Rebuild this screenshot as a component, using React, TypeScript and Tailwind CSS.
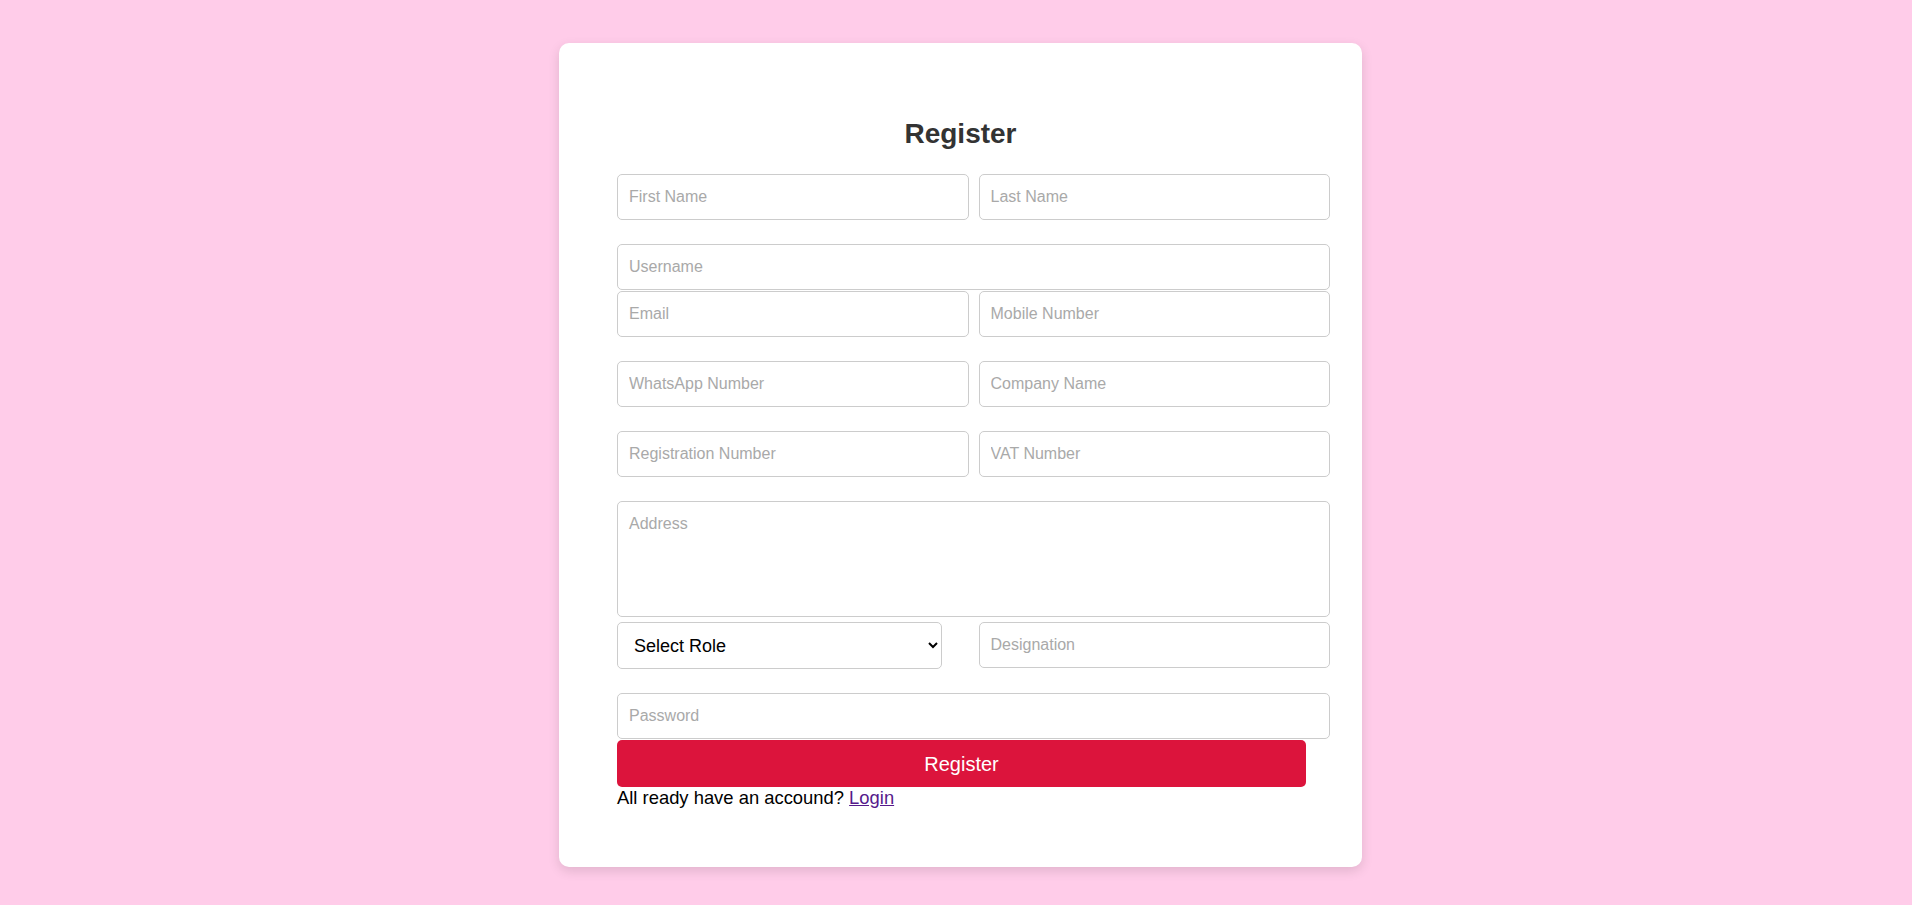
import React from "react";

const inputCls =
  "block w-full h-[46px] border border-[#ccc] rounded-[5px] bg-white px-[11px] text-[16px] text-black placeholder:text-[#a9a9a9] outline-none";

export default function App() {
  return (
    <div className="min-h-screen w-full bg-[#ffcce9] flex justify-center pt-[43px] pl-[9px] font-['Liberation_Sans',Arial,sans-serif]">
      <div className="w-[803px] h-[824px] bg-white rounded-[10px] shadow-[0_4px_12px_rgba(0,0,0,0.12)] pt-[75px]">
        <h2 className="text-center text-[28px] leading-[31px] font-bold text-[#333] mb-[25px]">
          Register
        </h2>
        <form className="ml-[58px] w-[713px]" onSubmit={(e) => e.preventDefault()}>
          <div className="grid grid-cols-2 gap-x-[10px] mb-6">
            <input className={inputCls} placeholder="First Name" />
            <input className={inputCls} placeholder="Last Name" />
          </div>
          <input className={inputCls + " mb-[1px]"} placeholder="Username" />
          <div className="grid grid-cols-2 gap-x-[10px] mb-6">
            <input className={inputCls} placeholder="Email" />
            <input className={inputCls} placeholder="Mobile Number" />
          </div>
          <div className="grid grid-cols-2 gap-x-[10px] mb-6">
            <input className={inputCls} placeholder="WhatsApp Number" />
            <input className={inputCls} placeholder="Company Name" />
          </div>
          <div className="grid grid-cols-2 gap-x-[10px] mb-6">
            <input className={inputCls} placeholder="Registration Number" />
            <input className={inputCls} placeholder="VAT Number" />
          </div>
          <textarea
            className="block w-full h-[116px] border border-[#ccc] rounded-[5px] bg-white px-[11px] py-[10px] text-[16px] text-black placeholder:text-[#a9a9a9] outline-none resize-none mb-[5px]"
            placeholder="Address"
          />
          <div className="grid grid-cols-2 gap-x-[10px] items-start mb-6">
            <select
              className="block w-[325px] h-[47px] border border-[#ccc] rounded-[5px] bg-white pl-[12px] pr-[8px] text-[18px] text-black outline-none"
              defaultValue=""
            >
              <option value="">Select Role</option>
              <option value="admin">Admin</option>
              <option value="user">User</option>
            </select>
            <input className={inputCls} placeholder="Designation" />
          </div>
          <input className={inputCls} type="password" placeholder="Password" />
          <button
            type="submit"
            className="block w-[689px] h-[47px] mt-[1px] bg-[#dc143c] text-white text-[20px] rounded-[5px]"
          >
            Register
          </button>
          <p className="text-[18.4px] leading-[21px] text-black">
            All ready have an accound?{" "}
            <a href="#" className="text-[#551a8b] underline">
              Login
            </a>
          </p>
        </form>
      </div>
    </div>
  );
}
